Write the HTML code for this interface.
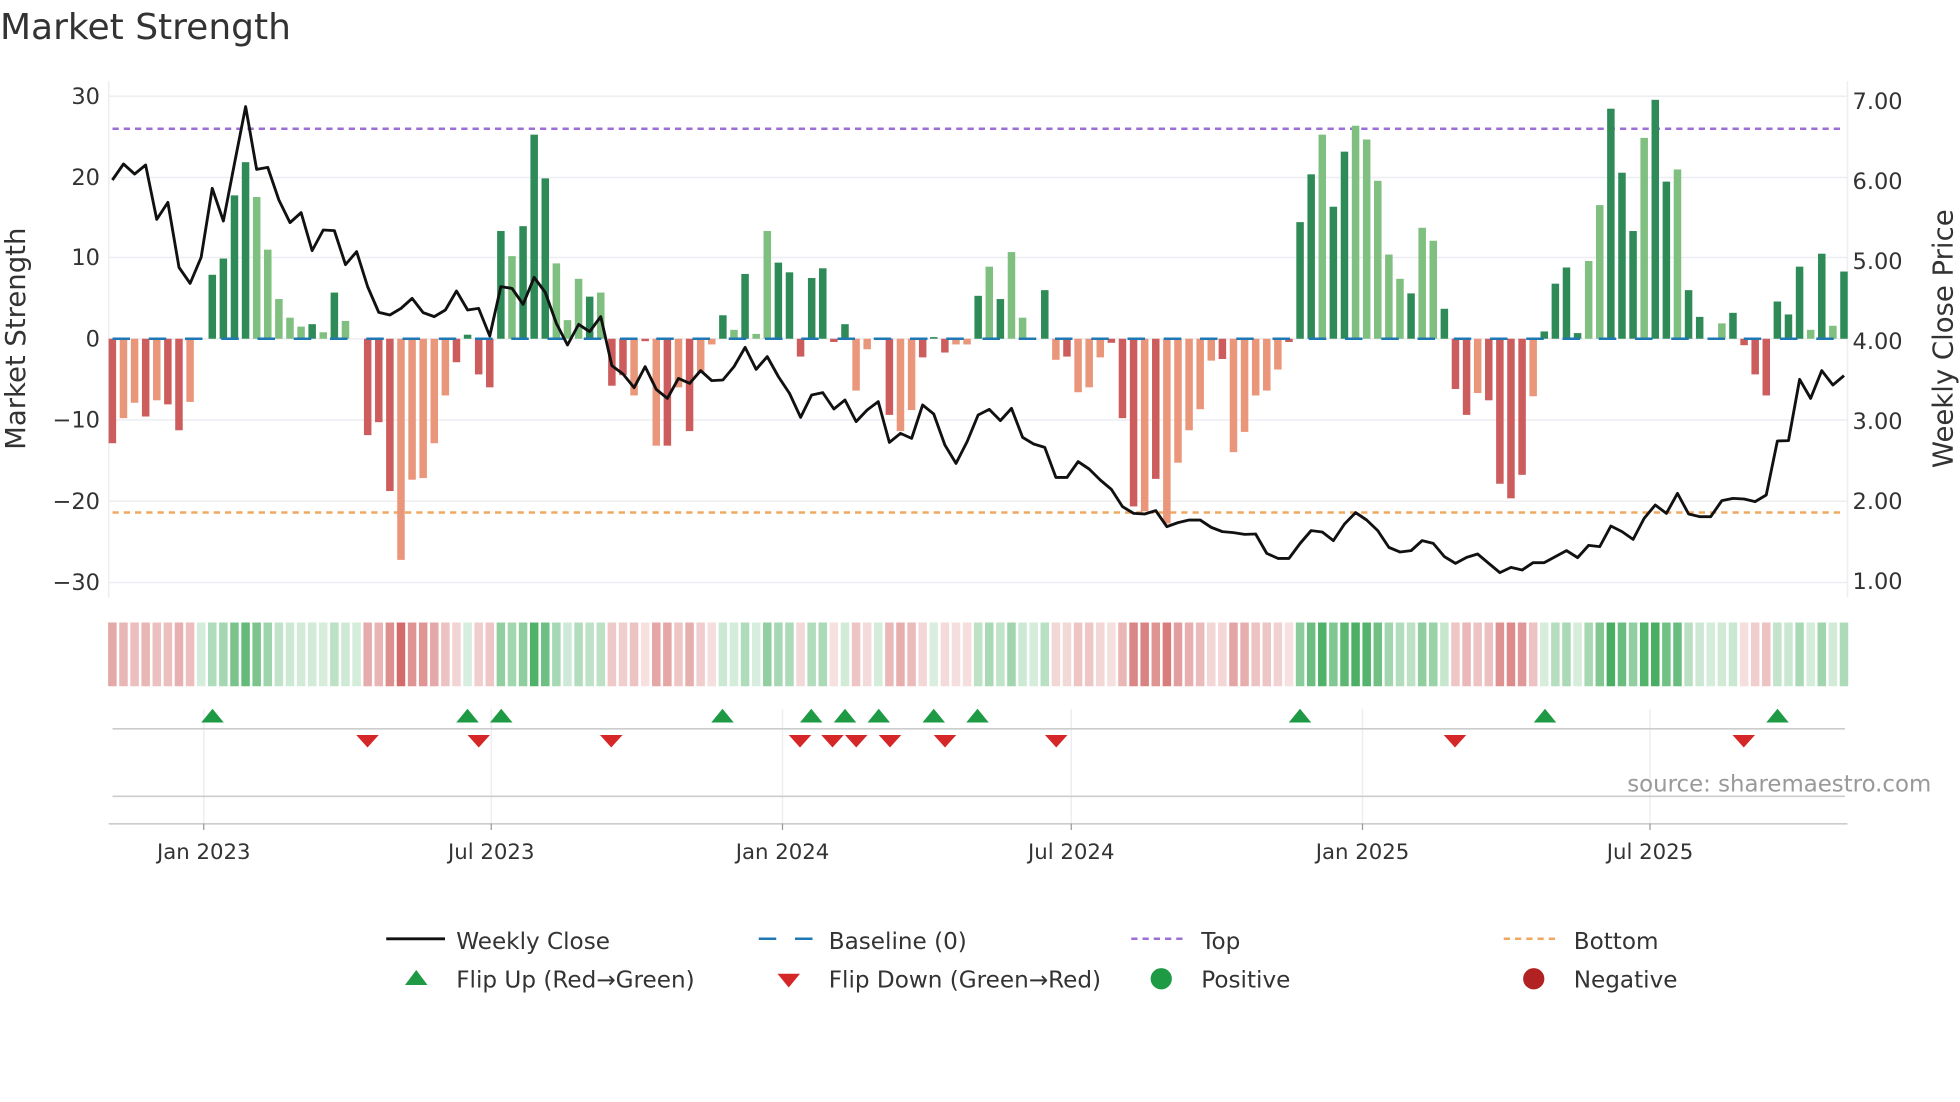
<!DOCTYPE html>
<html><head><meta charset="utf-8"><style>
html,body{margin:0;padding:0;background:#fff;}
svg{display:block;font-family:"DejaVu Sans","Liberation Sans",sans-serif;}
</style></head><body>
<svg id="s" width="1960" height="1102" viewBox="0 0 1568 881.6" xmlns="http://www.w3.org/2000/svg">
<rect width="1568" height="882" fill="#fff"/>
<text x="0" y="31" font-size="28.8" fill="#333">Market Strength</text>
<g stroke="#eceef2" stroke-width="1.2">
<line x1="87" x2="1478" y1="77" y2="77"/><line x1="87" x2="1478" y1="142" y2="142"/>
<line x1="87" x2="1478" y1="206" y2="206"/><line x1="87" x2="1478" y1="271" y2="271"/>
<line x1="87" x2="1478" y1="336" y2="336"/><line x1="87" x2="1478" y1="401" y2="401"/>
<line x1="87" x2="1478" y1="466" y2="466"/>
<line x1="87" x2="87" y1="65" y2="478"/><line x1="1478" x2="1478" y1="65" y2="478"/>
</g>
<g font-size="18" fill="#333" text-anchor="end">
<text x="80" y="83">30</text><text x="80" y="148">20</text><text x="80" y="212">10</text>
<text x="80" y="277">0</text><text x="80" y="342">−10</text><text x="80" y="407">−20</text><text x="80" y="472">−30</text>
</g>
<g font-size="18" fill="#333">
<text x="1482" y="87">7.00</text><text x="1482" y="151">6.00</text><text x="1482" y="215">5.00</text>
<text x="1482" y="279">4.00</text><text x="1482" y="343">3.00</text><text x="1482" y="407">2.00</text><text x="1482" y="471">1.00</text>
</g>
<text transform="translate(20,271) rotate(-90)" text-anchor="middle" font-size="22" fill="#333">Market Strength</text>
<text transform="translate(1562,271) rotate(-90)" text-anchor="middle" font-size="22" fill="#333">Weekly Close Price</text>
<line x1="90" x2="1476" y1="103" y2="103" stroke="#9b6fd6" stroke-width="2" stroke-dasharray="5,4"/>
<line x1="90" x2="1476" y1="410" y2="410" stroke="#f0a860" stroke-width="2" stroke-dasharray="5,4"/>
<g id="bars"></g>
<line x1="90" x2="1476" y1="271" y2="271" stroke="#1f77b4" stroke-width="2" stroke-dasharray="14,15"/>
<polyline id="price" fill="none" stroke="#111" stroke-width="2.3" stroke-linejoin="round"/>
<g id="heat"></g>
<g stroke="#eceef2" stroke-width="1.2">
<line x1="163" x2="163" y1="567" y2="659"/><line x1="393" x2="393" y1="567" y2="659"/>
<line x1="626" x2="626" y1="567" y2="659"/><line x1="857" x2="857" y1="567" y2="659"/>
<line x1="1090" x2="1090" y1="567" y2="659"/><line x1="1320" x2="1320" y1="567" y2="659"/>
</g>
<line x1="90" x2="1476" y1="583" y2="583" stroke="#ccc" stroke-width="1.3"/>
<line x1="90" x2="1476" y1="637" y2="637" stroke="#ccc" stroke-width="1.3"/>
<line x1="87" x2="1478" y1="659" y2="659" stroke="#ccc" stroke-width="1.3"/>
<g id="mk"></g>
<text x="1545" y="633" text-anchor="end" font-size="18.3" fill="#999">source: sharemaestro.com</text>
<g stroke="#999" stroke-width="1"><line x1="163" x2="163" y1="659" y2="664"/><line x1="393" x2="393" y1="659" y2="664"/><line x1="626" x2="626" y1="659" y2="664"/><line x1="857" x2="857" y1="659" y2="664"/><line x1="1090" x2="1090" y1="659" y2="664"/><line x1="1320" x2="1320" y1="659" y2="664"/></g>
<g font-size="17" fill="#333" text-anchor="middle">
<text x="163" y="687">Jan 2023</text><text x="393" y="687">Jul 2023</text><text x="626" y="687">Jan 2024</text>
<text x="857" y="687">Jul 2024</text><text x="1090" y="687">Jan 2025</text><text x="1320" y="687">Jul 2025</text>
</g>
<g font-size="18.5" fill="#333">
<line x1="309" x2="356" y1="751" y2="751" stroke="#111" stroke-width="2.3"/><text x="365" y="759">Weekly Close</text>
<line x1="607" x2="650" y1="751" y2="751" stroke="#1f77b4" stroke-width="2" stroke-dasharray="14,15"/><text x="663" y="759">Baseline (0)</text>
<line x1="905" x2="948" y1="751" y2="751" stroke="#9b6fd6" stroke-width="2" stroke-dasharray="5,4"/><text x="961" y="759">Top</text>
<line x1="1203" x2="1247" y1="751" y2="751" stroke="#f0a860" stroke-width="2" stroke-dasharray="5,4"/><text x="1259" y="759">Bottom</text>
<polygon points="324,788 342,788 333,776" fill="#1e9a44"/><text x="365" y="790">Flip Up (Red→Green)</text>
<polygon points="622,779 640,779 631,790" fill="#d62728"/><text x="663" y="790">Flip Down (Green→Red)</text>
<circle cx="929" cy="783" r="8.5" fill="#1e9a44"/><text x="961" y="790">Positive</text>
<circle cx="1227" cy="783" r="8.5" fill="#b22222"/><text x="1259" y="790">Negative</text>
</g>
</svg>
<script>
var V=[-12.9,-9.8,-7.9,-9.6,-7.6,-8.1,-11.3,-7.8,0,7.9,9.9,17.7,21.8,17.5,11,4.9,2.6,1.5,1.8,0.8,5.7,2.2,0,-11.9,-10.3,-18.8,-27.3,-17.4,-17.2,-12.9,-7,-2.9,0.5,-4.4,-6,13.3,10.2,13.9,25.2,19.8,9.3,2.3,7.4,5.2,5.7,-5.8,-4.5,-7,-0.3,-13.2,-13.2,-6,-11.4,-4.2,-0.7,2.9,1.1,8,0.6,13.3,9.4,8.2,-2.2,7.5,8.7,-0.4,1.8,-6.4,-1.3,0,-9.4,-11.4,-8.8,-2.3,0.2,-1.7,-0.7,-0.7,5.3,8.9,4.9,10.7,2.6,0,6,-2.6,-2.2,-6.6,-6,-2.3,-0.5,-9.8,-20.7,-21.3,-17.3,-22.8,-15.3,-11.3,-8.7,-2.7,-2.5,-14,-11.5,-7,-6.4,-3.8,-0.4,14.4,20.3,25.2,16.3,23.1,26.3,24.6,19.5,10.4,7.4,5.6,13.7,12.1,3.7,-6.2,-9.4,-6.7,-7.6,-17.9,-19.7,-16.8,-7.1,0.9,6.8,8.8,0.7,9.6,16.5,28.4,20.5,13.3,24.8,29.5,19.4,20.9,6,2.7,0,1.9,3.2,-0.8,-4.4,-7,4.6,3,8.9,1.1,10.5,1.6,8.3];
var D="dlldlddl0ddddllllldldl0dddllllldddddldddllldlddldldldlldldlldddddddl0ddlldddlldldl0ddldllldddldllllldllllldddlddllllldlldddlddddlddddlldddlddlddl0dddddddldldld";
var P=[270,222,252,225,388,337,532,580,502,295,393,220,50,238,232,330,398,368,482,420,422,524,485,590,667,675,655,625,668,680,660,603,660,655,738,590,595,643,562,607,700,765,703,725,680,827,852,893,830,898,925,865,880,842,872,870,830,772,838,800,860,910,982,915,908,957,930,995,960,935,1057,1030,1045,945,972,1065,1120,1055,975,958,992,955,1042,1062,1072,1162,1162,1115,1137,1170,1198,1250,1270,1272,1262,1310,1298,1290,1290,1312,1325,1328,1333,1332,1390,1405,1405,1360,1322,1326,1352,1302,1268,1290,1322,1372,1386,1382,1352,1360,1400,1420,1402,1392,1420,1448,1432,1440,1418,1418,1400,1382,1403,1366,1370,1308,1325,1348,1285,1245,1270,1210,1272,1280,1280,1232,1225,1227,1235,1215,1053,1052,868,925,842,885,857];
var ns="http://www.w3.org/2000/svg";
function el(t,a,p){var e=document.createElementNS(ns,t);for(var k in a)e.setAttribute(k,a[k]);p.appendChild(e);return e;}
var bars=document.getElementById('bars'),heat=document.getElementById('heat'),mk=document.getElementById('mk');
var pts=[];
for(var i=0;i<V.length;i++){
 var x=89.9+i*8.88,v=V[i],d=D[i]=='d';
 if(v!==0){var h=Math.abs(v)*6.48;var c=v>0?(d?'#2e8b57':'#7fbf7f'):(d?'#cd5c5c':'#e9967a');
  el('rect',{x:x-3,y:v>0?271-h:271,width:6,height:h,fill:c},bars);}
 var a=Math.min(1,0.2+Math.abs(v)/25*0.75);
 var hc=v>=0?'rgba(40,160,70,'+(v==0?0.2:a*0.85)+')':'rgba(200,70,70,'+a*0.8+')';
 el('rect',{x:x-3.4,y:498,width:6.8,height:51,fill:hc},heat);
 pts.push(x.toFixed(1)+','+(72+P[i]/3.75).toFixed(1));
}
document.getElementById('price').setAttribute('points',pts.join(' '));
[170,374,401,578,649,676,703,747,782,1040,1236,1422].forEach(function(x){el('polygon',{points:(x-9)+',578 '+(x+9)+',578 '+x+',567',fill:'#1e9a44'},mk);});
[294,383,489,640,666,685,712,756,845,1164,1395].forEach(function(x){el('polygon',{points:(x-9)+',588 '+(x+9)+',588 '+x+',598',fill:'#d62728'},mk);});
</script>
</body></html>
